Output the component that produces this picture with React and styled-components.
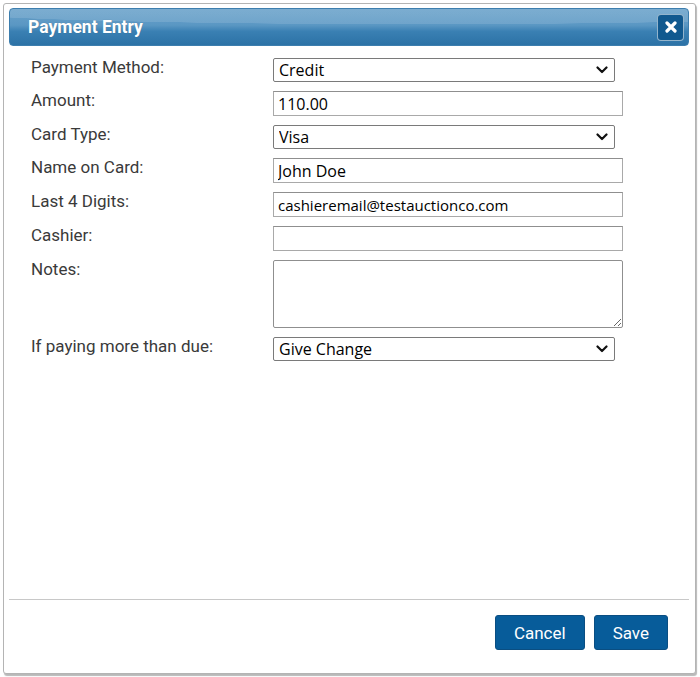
import React from 'react';
import styled, { createGlobalStyle } from 'styled-components';

const GlobalStyle = createGlobalStyle`
  html, body {
    margin: 0;
    padding: 0;
    background: #ffffff;
  }
  body {
    font-family: Roboto, "Liberation Sans", sans-serif;
  }
`;

const Page = styled.div`
  width: 700px;
  height: 677px;
  padding: 3px 4px 0 3px;
  box-sizing: border-box;
`;

const Dialog = styled.div`
  width: 693px;
  height: 671px;
  box-sizing: border-box;
  border: 1px solid #b4b4b4;
  border-radius: 3px;
  background: #fff;
  box-shadow: 1px 2px 1px rgba(0, 0, 0, 0.28);
  padding: 4px 6px 0 5px;
  display: flex;
  flex-direction: column;
`;

const TitleBar = styled.div`
  height: 36px;
  border-radius: 4px;
  display: flex;
  align-items: center;
  justify-content: space-between;
  padding: 0 4px 0 18px;
  background:
    radial-gradient(ellipse 120% 70% at 60% 0%, rgba(255, 255, 255, 0.12) 0 60%, transparent 61%),
    linear-gradient(#6aa2ca 0%, #5a97c3 45%, #3a80b3 62%, #2c72a6 100%);
  border: 1px solid #3d7eae;
`;

const Title = styled.h1`
  margin: 0;
  color: #fff;
  font-size: 17.5px;
  font-weight: 700;
  font-family: Roboto, "Liberation Sans", sans-serif;
  text-shadow: 0 0 1px rgba(0, 0, 0, 0.25);
`;

const CloseButton = styled.button`
  width: 27px;
  height: 27px;
  padding: 0;
  border-radius: 4px;
  border: 1px solid rgba(255, 255, 255, 0.55);
  background: #11598f;
  display: flex;
  align-items: center;
  justify-content: center;
  cursor: pointer;
`;

const Body = styled.div`
  flex: 1;
  padding: 12px 0 0 22px;
`;

const Form = styled.div`
  display: grid;
  grid-template-columns: 242px 350px;
  row-gap: 9px;
  align-items: start;
`;

const Label = styled.label`
  font-size: 17px;
  line-height: 17px;
  color: #3a3a3a;
  padding-top: 1px;
`;

const SelectWrap = styled.div`
  position: relative;
  width: 342px;
`;

const Select = styled.select`
  appearance: none;
  width: 100%;
  height: 24px;
  box-sizing: border-box;
  border: 1px solid #7a7a7a;
  border-radius: 2px;
  background: #fff;
  color: #000;
  font-family: "Open Sans", "Noto Sans", sans-serif;
  font-size: 16px;
  padding: 0 0 0 5px;
  outline: none;
`;

const Chevron = styled.svg`
  position: absolute;
  right: 7px;
  top: 8px;
  pointer-events: none;
`;

const Input = styled.input`
  width: 350px;
  height: 25px;
  box-sizing: border-box;
  border: 1px solid #a9a9a9;
  border-top-color: #8f8f8f;
  background: #fff;
  color: #000;
  font-family: "Open Sans", "Noto Sans", sans-serif;
  font-size: ${(p) => p.$size || 16}px;
  padding: 0 4px;
  outline: none;
`;

const TextArea = styled.textarea`
  width: 350px;
  height: 68px;
  box-sizing: border-box;
  border: 1px solid #8f8f8f;
  border-radius: 2px;
  font-family: "Open Sans", "Noto Sans", sans-serif;
  font-size: 14px;
  margin: 0;
  display: block;
`;

const Footer = styled.div`
  border-top: 1px solid #c8c8c8;
  height: 74px;
  box-sizing: border-box;
  display: flex;
  justify-content: flex-end;
  align-items: flex-start;
  gap: 9px;
  padding: 15px 21px 0 0;
`;

const Button = styled.button`
  height: 35px;
  padding: 0 18px;
  border: 1px solid #0a4e82;
  border-radius: 3px;
  background: #075c9a;
  color: #fff;
  font-family: Roboto, "Liberation Sans", sans-serif;
  font-size: 17px;
  cursor: pointer;
`;

const SelectField = ({ value, options }) => (
  <SelectWrap>
    <Select defaultValue={value}>
      {options.map((o) => (
        <option key={o}>{o}</option>
      ))}
    </Select>
    <Chevron width="12" height="8" viewBox="0 0 12 8">
      <path d="M1.5 1.5 L6 6 L10.5 1.5" fill="none" stroke="#111" strokeWidth="2.2" strokeLinecap="round" strokeLinejoin="round" />
    </Chevron>
  </SelectWrap>
);

const App = () => {
  return (
    <Page>
      <GlobalStyle />
      <Dialog>
        <TitleBar>
          <Title>Payment Entry</Title>
          <CloseButton aria-label="Close">
            <svg width="12" height="12" viewBox="0 0 12 12">
              <path d="M2 2 L10 10 M10 2 L2 10" stroke="#fff" strokeWidth="3.2" strokeLinecap="round" />
            </svg>
          </CloseButton>
        </TitleBar>
        <Body>
          <Form>
            <Label>Payment Method:</Label>
            <SelectField value="Credit" options={['Cash', 'Check', 'Credit']} />

            <Label>Amount:</Label>
            <Input defaultValue="110.00" />

            <Label>Card Type:</Label>
            <SelectField value="Visa" options={['Visa', 'MasterCard', 'Amex', 'Discover']} />

            <Label>Name on Card:</Label>
            <Input defaultValue="John Doe" />

            <Label>Last 4 Digits:</Label>
            <Input $size={15} defaultValue="cashieremail@testauctionco.com" />

            <Label>Cashier:</Label>
            <Input />

            <Label>Notes:</Label>
            <TextArea />

            <Label>If paying more than due:</Label>
            <SelectField value="Give Change" options={['Give Change', 'Apply as Credit']} />
          </Form>
        </Body>
        <Footer>
          <Button>Cancel</Button>
          <Button>Save</Button>
        </Footer>
      </Dialog>
    </Page>
  );
};

export default App;
